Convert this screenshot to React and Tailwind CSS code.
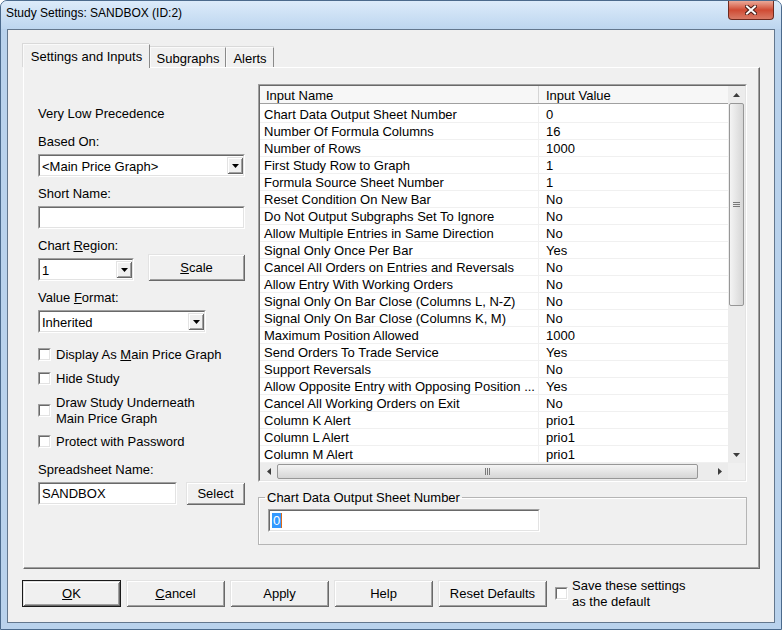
import React from "react";

const raised =
  "bg-[#f0f0f0] shadow-[inset_1px_1px_0_#e3e3e3,inset_-1px_-1px_0_#696969,inset_2px_2px_0_#ffffff,inset_-2px_-2px_0_#a0a0a0]";

const rows = [
  ["Chart Data Output Sheet Number", "0"],
  ["Number Of Formula Columns", "16"],
  ["Number of Rows", "1000"],
  ["First Study Row to Graph", "1"],
  ["Formula Source Sheet Number", "1"],
  ["Reset Condition On New Bar", "No"],
  ["Do Not Output Subgraphs Set To Ignore", "No"],
  ["Allow Multiple Entries in Same Direction", "No"],
  ["Signal Only Once Per Bar", "Yes"],
  ["Cancel All Orders on Entries and Reversals", "No"],
  ["Allow Entry With Working Orders", "No"],
  ["Signal Only On Bar Close (Columns L, N-Z)", "No"],
  ["Signal Only On Bar Close (Columns K, M)", "No"],
  ["Maximum Position Allowed", "1000"],
  ["Send Orders To Trade Service", "Yes"],
  ["Support Reversals", "No"],
  ["Allow Opposite Entry with Opposing Position ...", "Yes"],
  ["Cancel All Working Orders on Exit", "No"],
  ["Column K Alert", "prio1"],
  ["Column L Alert", "prio1"],
  ["Column M Alert", "prio1"],
];

function Sunken({ className = "", inner = "", children }) {
  return (
    <div className={`border border-t-[#a0a0a0] border-l-[#a0a0a0] border-r-white border-b-white ${className}`}>
      <div className={`h-full border border-t-[#696969] border-l-[#696969] border-r-[#e3e3e3] border-b-[#e3e3e3] bg-white ${inner}`}>
        {children}
      </div>
    </div>
  );
}

function Tri({ dir = "down", color = "#000" }) {
  const d = {
    down: "M0 0h7L3.5 4z",
    up: "M0 4h7L3.5 0z",
    left: "M4 0v7L0 3.5z",
    right: "M0 0v7L4 3.5z",
  }[dir];
  const vert = dir === "down" || dir === "up";
  return (
    <svg width={vert ? 7 : 4} height={vert ? 4 : 7} viewBox={vert ? "0 0 7 4" : "0 0 4 7"}>
      <path d={d} fill={color} />
    </svg>
  );
}

function Select({ value, className }) {
  return (
    <Sunken className={`h-[23px] ${className}`} inner="flex items-center">
      <span className="flex-1 pl-[2px] pt-[1px] leading-[17px]">{value}</span>
      <div className={`${raised} flex h-[17px] w-[16px] items-center justify-center`}>
        <Tri />
      </div>
    </Sunken>
  );
}

function Button({ children, className = "" }) {
  return (
    <div className={`${raised} flex items-center justify-center ${className}`}>
      {children}
    </div>
  );
}

function Check({ children }) {
  return (
    <div className="flex items-center">
      <Sunken className="h-[13px] w-[13px] shrink-0" />
      <div className="ml-[5px] pt-[1px] leading-[16px]">{children}</div>
    </div>
  );
}

function VScroll() {
  return (
    <div className="flex w-[17px] flex-col bg-[#ececec]">
      <div className="flex h-[17px] items-center justify-center">
        <Tri dir="up" color="#3c3c3c" />
      </div>
      <div className="mx-[1px] flex h-[203px] flex-col items-center justify-center gap-[1px] rounded-[2px] border border-[#979797] bg-gradient-to-r from-[#f4f4f4] to-[#d6d6d6]">
        <div className="h-px w-[7px] bg-[#7a7a7a]" />
        <div className="h-px w-[7px] bg-[#7a7a7a]" />
        <div className="h-px w-[7px] bg-[#7a7a7a]" />
      </div>
      <div className="flex-1" />
      <div className="flex h-[17px] items-center justify-center">
        <Tri dir="down" color="#3c3c3c" />
      </div>
    </div>
  );
}

function HScroll() {
  return (
    <div className="flex h-[17px] flex-1 bg-[#ececec]">
      <div className="flex w-[17px] items-center justify-center">
        <Tri dir="left" color="#3c3c3c" />
      </div>
      <div className="my-[1px] flex w-[421px] items-center justify-center gap-[1px] rounded-[2px] border border-[#979797] bg-gradient-to-b from-[#f4f4f4] to-[#d6d6d6]">
        <div className="h-[7px] w-px bg-[#7a7a7a]" />
        <div className="h-[7px] w-px bg-[#7a7a7a]" />
        <div className="h-[7px] w-px bg-[#7a7a7a]" />
      </div>
      <div className="flex-1" />
      <div className="flex w-[17px] items-center justify-center">
        <Tri dir="right" color="#3c3c3c" />
      </div>
    </div>
  );
}

export default function App() {
  return (
    <div className="h-[630px] w-[782px] bg-white font-[Liberation_Sans,Arial,sans-serif] text-[13px] text-black">
      <div className="flex h-full flex-col rounded-t-[7px] border border-[#4b6a8c] bg-[#b9d2ec]">
        {/* title bar */}
        <div className="flex h-[28px] items-start justify-between rounded-t-[6px] bg-gradient-to-b from-[#dcebfa] to-[#bdd6ef] pl-[5px] pr-[7px]">
          <span className="pt-[4px] text-[12px] leading-[16px]">Study Settings: SANDBOX (ID:2)</span>
          <div className="flex h-[19px] w-[46px] items-center justify-center rounded-b-[4px] border border-t-0 border-[#6e2a1f] bg-gradient-to-b from-[#eaa898] via-[#cf4a33] to-[#d87a66]">
            <svg width="12" height="10" viewBox="0 0 12 10">
              <path d="M2 1.5l8 7M10 1.5l-8 7" stroke="#4a1d16" strokeWidth="4" strokeLinecap="square" />
              <path d="M2 1.5l8 7M10 1.5l-8 7" stroke="#ffffff" strokeWidth="2" strokeLinecap="square" />
            </svg>
          </div>
        </div>

        {/* client area */}
        <div className="mx-[6px] mb-[6px] flex-1 border border-[#63778d] bg-[#f0f0f0] pl-[15px] pt-[14px]">
          <div className="flex h-[23px] items-end">
            <div className="relative z-10 -mb-px flex h-[24px] w-[127px] items-center justify-center border border-b-0 border-t-[#fafafa] border-l-[#fafafa] border-r-[#8a8a8a] bg-[#f0f0f0] pt-[1px] shadow-[-1px_-1px_0_#d9d9d9]">
              Settings and Inputs
            </div>
            <div className="flex h-[20px] w-[76px] items-center justify-center border border-b-0 border-t-[#fafafa] border-l-[#fafafa] border-r-[#8a8a8a] pt-[2px] shadow-[0_-1px_0_#d9d9d9]">
              Subgraphs
            </div>
            <div className="flex h-[20px] w-[48px] items-center justify-center border border-b-0 border-t-[#fafafa] border-l-[#fafafa] border-r-[#8a8a8a] pt-[2px] shadow-[0_-1px_0_#d9d9d9]">
              Alerts
            </div>
          </div>

          <div className="flex h-[502px] w-[737px] items-start border border-t-white border-l-white border-r-[#696969] border-b-[#696969] pl-[14px] pt-[16px] shadow-[inset_-1px_-1px_0_#a0a0a0]">
            {/* left column */}
            <div className="mt-[21px] flex w-[207px] flex-col">
              <div className="pt-[1px] leading-[16px]">Very Low Precedence</div>
              <div className="mt-[11px] pt-[1px] leading-[16px]">Based On:</div>
              <Select value="<Main Price Graph>" className="mt-[4px] w-[207px]" />
              <div className="mt-[8px] pt-[1px] leading-[16px]">Short Name:</div>
              <Sunken className="mt-[4px] h-[23px] w-[207px]" />
              <div className="mt-[8px] pt-[1px] leading-[16px]">
                Chart <u>R</u>egion:
              </div>
              <div className="flex h-[27px] items-end justify-between">
                <Select value="1" className="w-[96px]" />
                <Button className="h-[27px] w-[97px] pt-[1px]">
                  <span>
                    <u>S</u>cale
                  </span>
                </Button>
              </div>
              <div className="mt-[8px] pt-[1px] leading-[16px]">
                Value <u>F</u>ormat:
              </div>
              <Select value="Inherited" className="mt-[4px] w-[168px]" />
              <div className="mt-[13px]">
                <Check>
                  Display As <u>M</u>ain Price Graph
                </Check>
              </div>
              <div className="mt-[7px]">
                <Check>Hide Study</Check>
              </div>
              <div className="mt-[7px]">
                <Check>
                  Draw Study Underneath
                  <br />
                  Main Price Graph
                </Check>
              </div>
              <div className="mt-[6px]">
                <Check>Protect with Password</Check>
              </div>
              <div className="mt-[11px] pt-[1px] leading-[16px]">Spreadsheet Name:</div>
              <div className="mt-[4px] flex justify-between">
                <Sunken className="h-[23px] w-[139px]" inner="flex items-center pl-[2px] pt-[1px]">
                  SANDBOX
                </Sunken>
                <Button className="h-[23px] w-[59px] pt-[1px]">Select</Button>
              </div>
            </div>

            {/* right column */}
            <div className="ml-[13px] flex w-[489px] flex-col">
              <Sunken className="h-[398px]" inner="flex flex-col">
                <div className="flex">
                  <div className="w-[468px]">
                    <div className="flex h-[18px] border-b border-[#a0a0a0] bg-[#f7f7f7] leading-[19px]">
                      <div className="w-[279px] border-r border-[#d5d5d5] pl-[6px]">Input Name</div>
                      <div className="flex-1 pl-[7px]">Input Value</div>
                    </div>
                    <div className="pt-[2px]">
                      {rows.map(([name, value]) => (
                        <div key={name} className="flex h-[17px] border-b border-[#f0f0f0] leading-[18px]">
                          <div className="w-[279px] truncate border-r border-[#f0f0f0] pl-[4px]">{name}</div>
                          <div className="flex-1 pl-[7px]">{value}</div>
                        </div>
                      ))}
                    </div>
                  </div>
                  <VScroll />
                </div>
                <div className="flex">
                  <HScroll />
                  <div className="h-[17px] w-[17px] bg-[#f0f0f0]" />
                </div>
              </Sunken>

              <fieldset className="mt-[7px] h-[56px] border border-[#b5b5b5] p-0 shadow-[inset_1px_1px_0_#ffffff]">
                <legend className="ml-[6px] px-[2px] pt-[1px] leading-[16px]">Chart Data Output Sheet Number</legend>
                <div className="pl-[9px] pt-[3px]">
                  <Sunken className="h-[23px] w-[272px]" inner="flex items-center pl-[2px]">
                    <span className="bg-[#3399ff] px-[1px] leading-[15px] text-white">0</span>
                    <span className="h-[15px] w-px bg-[#d86a1c]" />
                  </Sunken>
                </div>
              </fieldset>
            </div>
          </div>

          {/* bottom buttons */}
          <div className="ml-[-1px] mt-[11px] flex h-[27px] items-center">
            <div className="h-[27px] w-[99px] border border-[#1a1a1a]">
              <Button className="h-full w-full">
                <span>
                  <u>O</u>K
                </span>
              </Button>
            </div>
            <Button className="ml-[5px] h-[27px] w-[99px]">
              <span>
                <u>C</u>ancel
              </span>
            </Button>
            <Button className="ml-[5px] h-[27px] w-[99px]">Apply</Button>
            <Button className="ml-[5px] h-[27px] w-[99px]">Help</Button>
            <Button className="ml-[5px] h-[27px] w-[109px]">Reset Defaults</Button>
            <div className="ml-[8px] flex items-center">
              <Sunken className="h-[13px] w-[13px] shrink-0" />
              <div className="ml-[4px] leading-[16px]">
                Save these settings
                <br />
                as the default
              </div>
            </div>
          </div>
        </div>
      </div>
    </div>
  );
}
